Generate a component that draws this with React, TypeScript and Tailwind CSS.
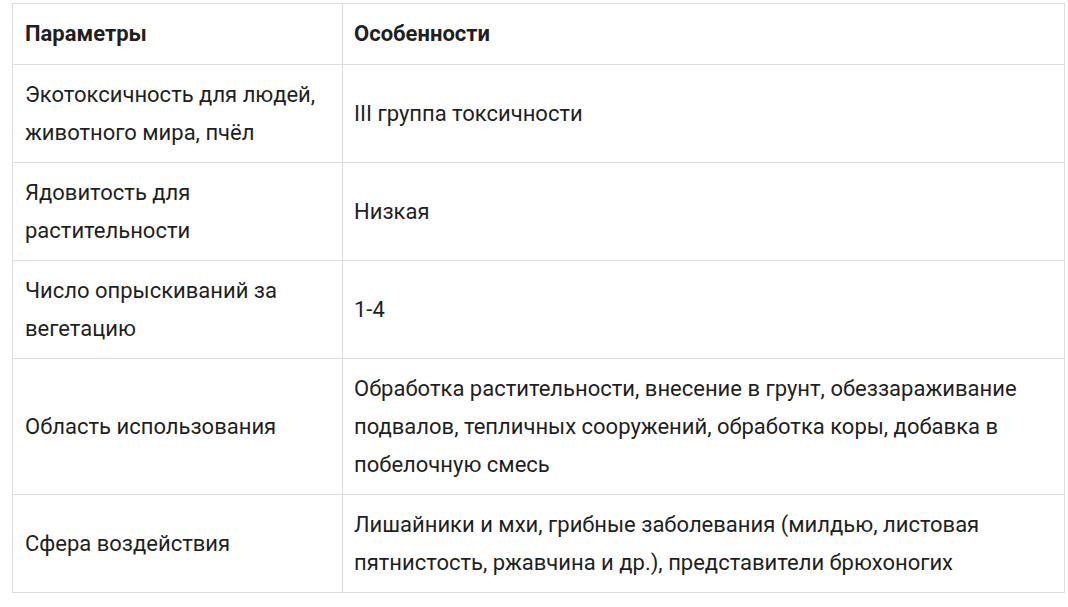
import React from "react";

const rows: [string, string][] = [
  ["Экотоксичность для людей, животного мира, пчёл", "III группа токсичности"],
  ["Ядовитость для растительности", "Низкая"],
  ["Число опрыскиваний за вегетацию", "1-4"],
  [
    "Область использования",
    "Обработка растительности, внесение в грунт, обеззараживание подвалов, тепличных сооружений, обработка коры, добавка в побелочную смесь",
  ],
  [
    "Сфера воздействия",
    "Лишайники и мхи, грибные заболевания (милдью, листовая пятнистость, ржавчина и др.), представители брюхоногих",
  ],
];

export default function App() {
  return (
    <div className="bg-white w-[1068px] h-[607px] pt-[3px] pl-[12px]" style={{ fontFamily: "Roboto, 'Noto Sans', sans-serif" }}>
      <table className="border-collapse w-[1053px] text-[22px] leading-[38px] text-[#1f1f1f] table-fixed">
        <colgroup>
          <col className="w-[330px]" />
          <col />
        </colgroup>
        <thead>
          <tr>
            <th className="border border-[#dcdde2] text-left font-bold align-middle pl-[12px] pr-[12px] pt-[11px] pb-[11px]">Параметры</th>
            <th className="border border-[#dcdde2] text-left font-bold align-middle pl-[11px] pr-[12px] pt-[11px] pb-[11px]">Особенности</th>
          </tr>
        </thead>
        <tbody>
          {rows.map(([a, b], i) => (
            <tr key={i}>
              <td className="border border-[#dcdde2] align-middle pl-[12px] pr-[12px] pt-[11px] pb-[10px]">{a}</td>
              <td className="border border-[#dcdde2] align-middle pl-[11px] pr-[12px] pt-[11px] pb-[10px]">{b}</td>
            </tr>
          ))}
        </tbody>
      </table>
    </div>
  );
}
